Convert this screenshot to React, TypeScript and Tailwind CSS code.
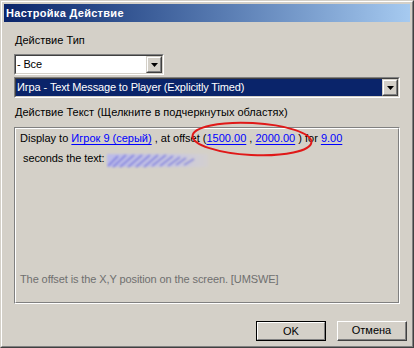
import React from "react";

const font = { fontFamily: '"Liberation Sans", Arial, sans-serif' };

function Arrow() {
  return (
    <svg width="7" height="4" viewBox="0 0 7 4">
      <path d="M0 0H7L3.5 4Z" fill="#000" />
    </svg>
  );
}

function DropBtn() {
  return (
    <div className="w-[16px] h-full border-t border-l border-t-[#d4d0c8] border-l-[#d4d0c8] border-b border-r border-b-[#404040] border-r-[#404040] bg-[#d4d0c8]">
      <div className="w-full h-full border-t border-l border-t-white border-l-white border-b border-r border-b-[#808080] border-r-[#808080] flex items-center justify-center">
        <Arrow />
      </div>
    </div>
  );
}

function Combo({ width, text, selected }: { width: string; text: string; selected?: boolean }) {
  return (
    <div className={`${width} h-[21px] border-t border-l border-t-[#808080] border-l-[#808080] border-b border-r border-b-white border-r-white`}>
      <div className="w-full h-full border-t border-l border-t-[#404040] border-l-[#404040] border-b border-r border-b-[#d4d0c8] border-r-[#d4d0c8] bg-white flex">
        <div
          className={`flex-1 flex items-center pl-[1px] text-[11px] leading-[13px] tracking-[-0.15px] ${
            selected ? "bg-[#0a246a] text-white" : "text-black"
          }`}
        >
          {text}
        </div>
        <DropBtn />
      </div>
    </div>
  );
}

function Link({ children }: { children: React.ReactNode }) {
  return <span className="text-[#0000ff] underline underline-offset-[2px]">{children}</span>;
}

export default function App() {
  return (
    <div className="relative w-[414px] h-[348px] bg-[#d4d0c8] text-[11px] text-black" style={font}>
      <div className="w-full h-full border-t border-l border-t-[#d4d0c8] border-l-[#d4d0c8] border-b border-r border-b-[#404040] border-r-[#404040]">
        <div className="w-full h-full border-t border-l border-t-white border-l-white border-b border-r border-b-[#808080] border-r-[#808080] p-[2px] flex flex-col">
          <div className="h-[18px] bg-gradient-to-r from-[#0a246a] to-[#a6caf0] flex items-center pl-[2px]">
            <span className="text-white font-bold text-[11px] leading-[13px] tracking-[0.3px]">Настройка Действие</span>
          </div>
          <div className="flex-1 flex flex-col px-[10px]">
            <div className="mt-[12px] pl-[1px] leading-[13px]">Действие Тип</div>
            <div className="mt-[7px]">
              <Combo width="w-[150px]" text="- Все" />
            </div>
            <div className="mt-[2px]">
              <Combo width="w-full" text="Игра - Text Message to Player (Explicitly Timed)" selected />
            </div>
            <div className="mt-[8px] pl-[1px] leading-[13px]">
              Действие Текст (Щелкните в подчеркнутых областях)
            </div>
            <div className="mt-[8px] h-[177px] border-t border-l border-t-[#808080] border-l-[#808080] border-b border-r border-b-white border-r-white">
              <div className="w-full h-full border-t border-l border-t-white border-l-white border-b border-r border-b-[#808080] border-r-[#808080] flex flex-col pl-[4px] pt-[1px]">
                <div className="leading-[17px] whitespace-pre">
                  {"Display to "}
                  <Link>Игрок 9 (серый)</Link>
                  {" , at offset ("}
                  <Link>1500.00</Link>
                  {" , "}
                  <Link>2000.00</Link>
                  {" ) for "}
                  <Link>9.00</Link>
                </div>
                <div className="leading-[17px] whitespace-pre flex items-center pl-[3px] tracking-[-0.1px]">
                  <span>seconds the text:</span>
                  <svg width="104" height="17" viewBox="0 0 104 17" className="ml-[2px] mt-[5px]">
                    <defs>
                      <filter id="bl" x="-10%" y="-30%" width="120%" height="160%">
                        <feGaussianBlur stdDeviation="1" />
                      </filter>
                      <linearGradient id="fade" x1="0" x2="1" y1="0" y2="0">
                        <stop offset="0" stopColor="#b8b8ee" stopOpacity="0.9" />
                        <stop offset="0.7" stopColor="#c4c4ea" stopOpacity="0.7" />
                        <stop offset="1" stopColor="#d0cee0" stopOpacity="0.3" />
                      </linearGradient>
                    </defs>
                    <g filter="url(#bl)">
                      <rect x="1" y="2" width="101" height="13" fill="url(#fade)" />
                      <path d="M2 14L12 4M7 15L20 3M14 15L28 3M22 15L36 3M30 15L44 3M38 15L52 3M46 14L60 3M54 14L67 4M62 14L74 5M70 13L80 6M78 13L88 7"
                        stroke="#6f6fdc" strokeWidth="1.8" opacity="0.75" />
                    </g>
                  </svg>
                </div>
                <div className="flex-1" />
                <div className="leading-[13px] text-[#6f6f6f] mb-[16px] tracking-[-0.1px]">
                  The offset is the X,Y position on the screen. [UMSWE]
                </div>
              </div>
            </div>
            <div className="flex-1" />
            <div className="flex justify-end gap-[11px] mb-[3px] mr-[-7px]">
              <div className="w-[70px] h-[20px] border border-black">
                <div className="w-full h-full border-t border-l border-t-white border-l-white border-b border-r border-b-[#808080] border-r-[#808080] flex items-center justify-center leading-[13px]">
                  OK
                </div>
              </div>
              <div className="w-[70px] h-[20px] border-t border-l border-t-white border-l-white border-b border-r border-b-[#404040] border-r-[#404040]">
                <div className="w-full h-full border-b border-r border-b-[#808080] border-r-[#808080] flex items-center justify-center leading-[13px]">
                  Отмена
                </div>
              </div>
            </div>
          </div>
        </div>
      </div>
      <svg className="absolute left-[190px] top-[121px]" width="124" height="37" viewBox="0 0 124 37">
        <ellipse cx="62" cy="18" rx="59.5" ry="16" fill="none" stroke="#e01818" strokeWidth="2" transform="rotate(3 62 18)" />
      </svg>
    </div>
  );
}
